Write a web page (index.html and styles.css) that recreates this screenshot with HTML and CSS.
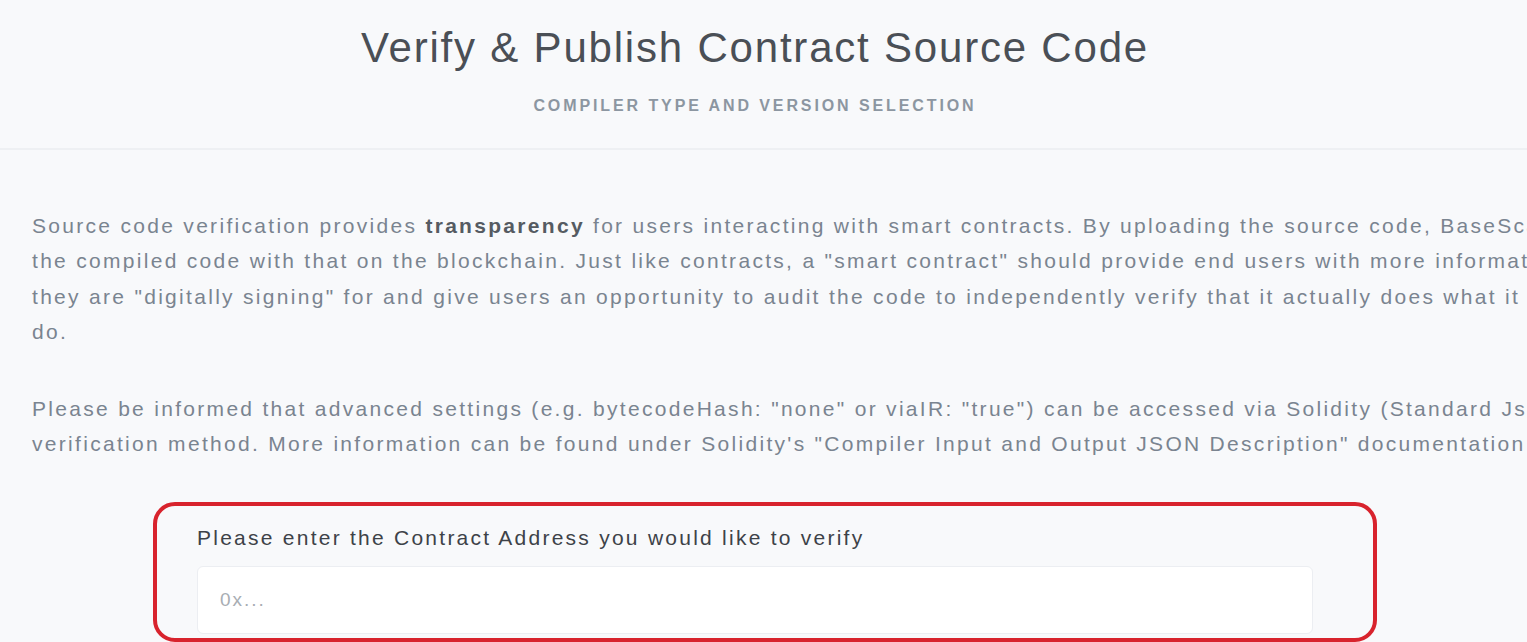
FILE: index.html
```html
<!DOCTYPE html>
<html lang="en">

<head>
    <meta charset="UTF-8">
    <meta name="viewport" content="width=device-width, initial-scale=1.0">
    <title>Verify &amp; Publish Contract Source Code</title>
    <link rel="stylesheet" href="styles.css">
</head>

<body>
    <div class="page-head">
        <h1 class="title">Verify &amp; Publish Contract Source Code</h1>
        <div class="subtitle">Compiler Type and Version Selection</div>
    </div>

    <div class="content">
        <p class="info">
            Source code verification provides <b>transparency</b> for users interacting with smart contracts. By uploading the source code, BaseScan will match<br>
            the compiled code with that on the blockchain. Just like contracts, a "smart contract" should provide end users with more information on what<br>
            they are "digitally signing" for and give users an opportunity to audit the code to independently verify that it actually does what it is supposed to<br>
            do.
        </p>
        <p class="info">
            Please be informed that advanced settings (e.g. bytecodeHash: "none" or viaIR: "true") can be accessed via Solidity (Standard Json-Input)<br>
            verification method. More information can be found under Solidity's "Compiler Input and Output JSON Description" documentation section.
        </p>

        <!-- ADDRESS FORM -->
        <div class="form-box">
            <label class="label" for="address">Please enter the Contract Address you would like to verify</label>
            <input class="input" id="address" type="text" placeholder="0x...">
        </div>
    </div>
</body>

</html>
```

FILE: styles.css
```css
body {
    margin: 0;
    background-color: #f8f9fb;
    font-family: "Liberation Sans", Arial, sans-serif;
    overflow: hidden;
    white-space: nowrap;
}

.page-head {
    text-align: center;
    padding: 24px 17px 33px 0;
    border-bottom: 2px solid #eef0f3;
}

.title {
    margin: 0;
    font-size: 42px;
    font-weight: 400;
    line-height: 48px;
    letter-spacing: 1.8px;
    color: #4a4f56;
}

.subtitle {
    margin-top: 25px;
    font-size: 16px;
    line-height: 18px;
    font-weight: 700;
    letter-spacing: 2.9px;
    text-transform: uppercase;
    color: #8c96a1;
}

.content {
    padding: 58px 0 0 32px;
}

.info {
    margin: 0 0 41px;
    font-size: 21px;
    line-height: 35.4px;
    letter-spacing: 2.3px;
    color: #7a8490;
}

.info b {
    color: #555b62;
}

.form-box {
    display: flex;
    flex-direction: column;
    width: 1176px;
    margin-left: 121px;
    padding: 18px 0 4px 40px;
    border: 4px solid #d8232d;
    border-radius: 22px;
}

.label {
    font-size: 21px;
    line-height: 28px;
    letter-spacing: 2.25px;
    color: #3d4248;
}

.input {
    width: 1116px;
    height: 68px;
    margin-top: 14px;
    box-sizing: border-box;
    padding: 0 22px;
    font-family: inherit;
    font-size: 19px;
    letter-spacing: 2px;
    color: #333;
    background-color: #fff;
    border: 1px solid #eceef2;
    border-radius: 6px;
}

.input::placeholder {
    color: #a8adb3;
}
```
